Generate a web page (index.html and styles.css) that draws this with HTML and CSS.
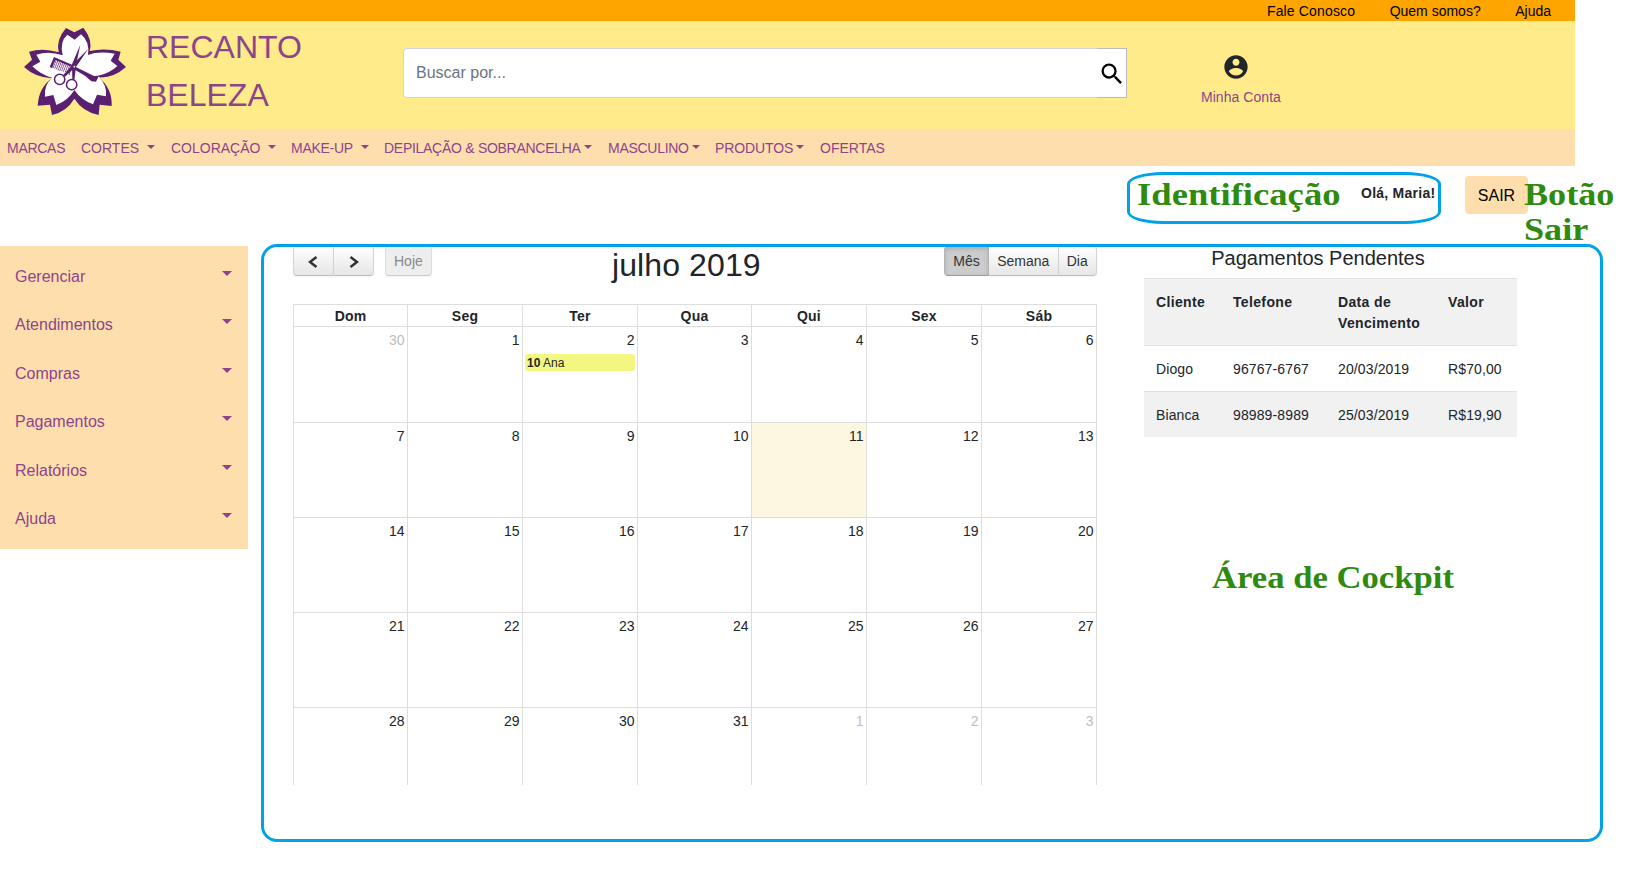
FILE: index.html
```html
<!DOCTYPE html>
<html lang="pt-BR">
<head>
<meta charset="utf-8">
<title>Recanto Beleza</title>
<link rel="stylesheet" href="styles.css">
</head>
<body>
<div class="page">
  <div class="topbar"><a class="wide">Fale Conosco</a><a>Quem somos?</a><a>Ajuda</a></div>
  <header class="header">
    <svg class="logo" viewBox="0 0 390 330">
      <path fill="#5b1f70" d="M146 112Q137 75 168 39L193 52L220 38Q249 75 239 108Q285 98 332 110L325 134L348 156Q310 190 266 187Q307 220 305 273L269 269L266 300Q218 290 193 251Q170 290 126 300L120 269L83 272Q86 218 126 190Q75 187 42 156L66 134L57 110Q100 98 146 112Z"/>
      <path fill="#fff" d="M158 121Q148 80 172 59L194 74L213 58Q240 80 234 120Q264 108 314 116L302 137L322 153Q298 176 264 182Q292 210 288 244L261 239L249 268Q214 255 193 225Q174 257 139 270L130 240L105 245Q101 211 126 188Q93 180 67 154L91 140L79 119Q116 107 158 121Z"/>
      <path fill="#5b1f70" d="M132 126L188 150L186 157L136 135L126 160L119 156ZM192 153L205 160L252 183L267 182L258 200L244 199L226 183L192 163Z"/>
      <path fill="none" stroke="#5b1f70" stroke-width="2.500" d="M138 136L129 159M143 138L134 161M148 141L139 163M153 143L144 166M158 145L149 168M163 147L155 168M168 150L160 170M173 152L166 171M178 154L171 175M183 157L177 180"/>
      <path fill="none" stroke="#fff" stroke-width="1.200" d="M132 144L180 164M129 151L176 171"/>
      <path fill="#5b1f70" d="M211 89L199 146L193 196L187 197L186 148ZM235 101L200 153L164 186L159 181L187 150Z"/>
      <circle cx="193" cy="155" r="2.500" fill="#fff"/>
      <g fill="#fff" stroke="#5b1f70" stroke-width="4.500"><circle cx="149" cy="193" r="15.500"/><circle cx="185" cy="209" r="15.500"/></g>
    </svg>
    <h1 class="brand">RECANTO<br>BELEZA</h1>
    <div class="search">
      <div class="field">Buscar por...</div>
      <div class="search-btn"><svg viewBox="0 0 24 24"><path d="M15.500 14h-.79l-.28-.27A6.471 6.471 0 0 0 16 9.500 6.500 6.500 0 1 0 9.500 16c1.610 0 3.090-.59 4.230-1.570l.27.28v.79l5 4.990L20.490 19l-4.990-5zm-6 0C7.010 14 5 11.990 5 9.500S7.010 5 9.500 5 14 7.010 14 9.500 11.990 14 9.500 14z"/></svg></div>
    </div>
    <div class="account">
      <svg viewBox="0 0 24 24"><path fill="#212529" d="M12 2C6.480 2 2 6.480 2 12s4.480 10 10 10 10-4.480 10-10S17.520 2 12 2zm0 3c1.660 0 3 1.340 3 3s-1.340 3-3 3-3-1.340-3-3 1.340-3 3-3zm0 14.200c-2.500 0-4.710-1.280-6-3.220.03-1.990 4-3.080 6-3.080 1.990 0 5.970 1.090 6 3.080-1.290 1.940-3.500 3.220-6 3.220z"/></svg>
      <a>Minha Conta</a>
    </div>
  </header>
  <nav class="nav">
    <a class="tight">MARCAS</a>
    <a>CORTES<i class="caret far"></i></a>
    <a>COLORAÇÃO<i class="caret far"></i></a>
    <a class="tight">MAKE-UP<i class="caret far"></i></a>
    <a class="tight">DEPILAÇÃO &amp; SOBRANCELHA<i class="caret"></i></a>
    <a class="tight">MASCULINO<i class="caret"></i></a>
    <a class="snug">PRODUTOS<i class="caret"></i></a>
    <a>OFERTAS</a>
  </nav>
  <div class="session"><strong>Olá, Maria!</strong><button class="logout">SAIR</button></div>
  <div class="content">
    <aside class="sidebar">
      <a>Gerenciar<i class="caret"></i></a>
      <a>Atendimentos<i class="caret"></i></a>
      <a>Compras<i class="caret"></i></a>
      <a>Pagamentos<i class="caret"></i></a>
      <a>Relatórios<i class="caret"></i></a>
      <a>Ajuda<i class="caret"></i></a>
    </aside>
    <section class="calendar">
      <div class="toolbar">
        <div class="tools">
          <div class="group"><button class="arrow"><svg viewBox="0 0 10 12"><path d="M8.500 1L2 6l6.500 5"/></svg></button><button class="arrow"><svg viewBox="0 0 10 12"><path d="M1.500 1L8 6l-6.500 5"/></svg></button></div>
          <div class="group"><button class="today-btn">Hoje</button></div>
        </div>
        <h2>julho 2019</h2>
        <div class="group views"><button class="active">Mês</button><button>Semana</button><button>Dia</button></div>
      </div>
      <div class="week head"><b>Dom</b><b>Seg</b><b>Ter</b><b>Qua</b><b>Qui</b><b>Sex</b><b>Sáb</b></div>
      <div class="week first"><div class="other">30</div><div>1</div><div>2<p class="event"><b>10</b> Ana</p></div><div>3</div><div>4</div><div>5</div><div>6</div></div>
      <div class="week"><div>7</div><div>8</div><div>9</div><div>10</div><div class="today">11</div><div>12</div><div>13</div></div>
      <div class="week"><div>14</div><div>15</div><div>16</div><div>17</div><div>18</div><div>19</div><div>20</div></div>
      <div class="week"><div>21</div><div>22</div><div>23</div><div>24</div><div>25</div><div>26</div><div>27</div></div>
      <div class="week last"><div>28</div><div>29</div><div>30</div><div>31</div><div class="other">1</div><div class="other">2</div><div class="other">3</div></div>
    </section>
    <section class="pending">
      <h3>Pagamentos Pendentes</h3>
      <table>
        <colgroup><col class="c1"><col class="c2"><col class="c3"><col></colgroup>
        <thead><tr><th>Cliente</th><th>Telefone</th><th>Data de Vencimento</th><th>Valor</th></tr></thead>
        <tbody>
          <tr><td>Diogo</td><td>96767-6767</td><td>20/03/2019</td><td>R$70,00</td></tr>
          <tr><td>Bianca</td><td>98989-8989</td><td>25/03/2019</td><td>R$19,90</td></tr>
        </tbody>
      </table>
    </section>
  </div>
</div>
<div class="outline outline-id"></div>
<div class="outline outline-area"></div>
<div class="note note-id">Identificação</div>
<div class="note note-exit">Botão<br>Sair</div>
<div class="note note-area">Área de Cockpit</div>
</body>
</html>
```

FILE: styles.css
```css
* { box-sizing: border-box; }
body {
  margin: 0;
  width: 1643px;
  height: 882px;
  position: relative;
  overflow: hidden;
  background: #fff;
  color: #212529;
  font-family: "Liberation Sans", Arial, sans-serif;
  font-size: 14px;
}
h1, h2, h3, p { margin: 0; font-weight: 400; }
button { font-family: inherit; padding: 0; }
.page { width: 1575px; }

.topbar {
  display: flex;
  justify-content: flex-end;
  gap: 34.500px;
  height: 21px;
  padding-right: 24px;
  line-height: 22px;
  background: #ffa500;
  color: #000;
}
.topbar .wide { letter-spacing: .15px; }

.header {
  display: flex;
  height: 108px;
  background: #ffeb8a;
  color: #8b458b;
}
.logo { width: 130px; height: 110px; margin: -6px 0 0 10px; flex: none; }
.brand { width: 256px; margin-left: 6px; padding-top: 2px; font-size: 32px; line-height: 48px; }
.search {
  display: flex;
  width: 724px;
  height: 50px;
  margin: 27px 0 0 1px;
  background: #fff;
  border-radius: 4px 0 0 4px;
}
.field {
  flex: 1;
  border: 1px solid #ced4da;
  border-right: 0;
  border-radius: 4px 0 0 4px;
  padding-left: 12px;
  font-size: 16px;
  line-height: 47px;
  color: #6c757d;
}
.search-btn { width: 30px; border: 1px solid #bbb; border-left: 0; }
.search-btn svg { display: block; width: 28px; height: 28px; margin: 11px 0 0 1px; }
.account { width: 90px; margin-left: 73px; padding-top: 32px; line-height: 16px; }
.account svg { display: block; width: 28px; height: 28px; margin-left: 22px; }
.account a { display: block; margin: 8px 0 0 1px; letter-spacing: .05px; }

.nav {
  display: grid;
  grid-template-columns: 74px 90px 120px 93px 224px 107px 105px 90px;
  height: 37px;
  padding-left: 7px;
  line-height: 38px;
  background: #ffdead;
  color: #8b458b;
  white-space: nowrap;
}
.tight { letter-spacing: -.28px; }
.snug { letter-spacing: -.1px; }
.caret {
  display: inline-block;
  border: 4px solid transparent;
  border-top-color: #8b458b;
  border-bottom: 0;
  margin-left: 3px;
  vertical-align: 4px;
}
.caret.far { margin-left: 8px; }

.session { display: flex; height: 80px; padding: 10px 47px 0 1361px; }
.session strong { width: 104px; line-height: 35px; letter-spacing: .25px; white-space: nowrap; }
.logout { width: 63px; height: 38px; border: 0; border-radius: 4px; background: #ffdead; font-size: 16px; color: #000; padding-top: 1px; }

.content { display: flex; align-items: flex-start; }
.sidebar { width: 248px; height: 303px; padding: 7px 15px 0; background: #ffdead; color: #8b458b; font-size: 16px; }
.sidebar a { display: flex; justify-content: space-between; height: 48.400px; line-height: 48px; }
.sidebar .caret { border-width: 5px 5px 0; margin: 18px 1px 0 0; height: 5px; }

.calendar { width: 804px; margin-left: 45px; }
.toolbar { display: flex; height: 58px; }
.toolbar h2 { width: 332px; font-size: 32px; line-height: 38px; text-align: left; letter-spacing: .1px; }
.tools { display: flex; gap: 11px; width: 319px; }
.group { display: flex; height: 30px; }
.group button {
  border: 1px solid;
  border-color: #e6e6e6 #d4d4d4 #bfbfbf;
  border-left-width: 0;
  background: linear-gradient(#fff, #e6e6e6);
  box-shadow: 0 1px 2px rgba(0, 0, 0, .05);
  color: #333;
  font-size: 14px;
  padding: 0 8px 1px;
}
.group button:first-child { border-left-width: 1px; border-radius: 4px 0 0 4px; }
.group button:last-child { border-radius: 0 4px 4px 0; }
.group .arrow { width: 40px; }
.group .arrow:first-child { width: 41px; padding-right: 10px; }
.arrow svg { width: 10px; height: 12px; fill: none; stroke: #333; stroke-width: 2.500; vertical-align: -2px; }
.group .today-btn { width: 47px; padding-right: 9px; border-radius: 4px !important; background: #eee; color: #888; border-color: #ddd #ddd #ccc; }
.views { width: 153px; }
.views button { flex: 1 1 auto; }
.group .active { background: #ccc; border-color: #b5b5b5 #b5b5b5 #999; box-shadow: inset 0 2px 4px rgba(0, 0, 0, .15); }

.week {
  display: grid;
  grid-template-columns: 115px 115px 115px 114px 115px 115px 115px;
  height: 95px;
  border-top: 1px solid #ddd;
  text-align: right;
}
.week > * { border-right: 1px solid #ddd; padding: 5px 2.500px 0 1px; line-height: 17px; }
.week > :first-child { border-left: 1px solid #ddd; }
.head { height: 22px; }
.head b { text-align: center; padding: 3px 0 0; letter-spacing: .2px; }
.first { height: 96px; }
.last { height: 78px; }
.other { color: #bcbdbe; }
.today { background: #fdf7e2; }
.event { height: 17px; margin: 5px 0 0 1px; padding-left: 2px; border-radius: 3px; background: #f3f781; font-size: 12px; line-height: 18px; text-align: left; }

.pending { width: 373px; margin-left: 47px; }
.pending h3 { height: 32px; padding-right: 25px; text-align: center; font-size: 20px; line-height: 24px; }
table { width: 373px; border-collapse: separate; border-spacing: 0; table-layout: fixed; line-height: 21px; letter-spacing: .12px; }
.c1 { width: 77px; }
.c2 { width: 105px; }
.c3 { width: 110px; }
th, td { padding: 13px 0 11px 12px; border-top: 1px solid #dee2e6; text-align: left; vertical-align: top; }
th { height: 67px; letter-spacing: .35px; }
td { height: 46px; }
thead tr, tbody tr:nth-child(even) { background: #f1f1f1; }

.outline { position: absolute; border: 3px solid #00a2e8; }
.outline-id { left: 1127px; top: 172px; width: 314px; height: 52px; border-radius: 36px / 12px; }
.outline-area { left: 261px; top: 244px; width: 1342px; height: 598px; border-radius: 16px; }
.note {
  position: absolute;
  color: #2f8a10;
  font: bold 32px/35px "Liberation Serif", "Times New Roman", serif;
  white-space: nowrap;
  transform-origin: 0 0;
}
.note-id { left: 1137px; top: 177px; transform: scaleX(1.145); }
.note-exit { left: 1524px; top: 177px; transform: scaleX(1.130); }
.note-area { left: 1212px; top: 560px; transform: scaleX(1.083); }
```
